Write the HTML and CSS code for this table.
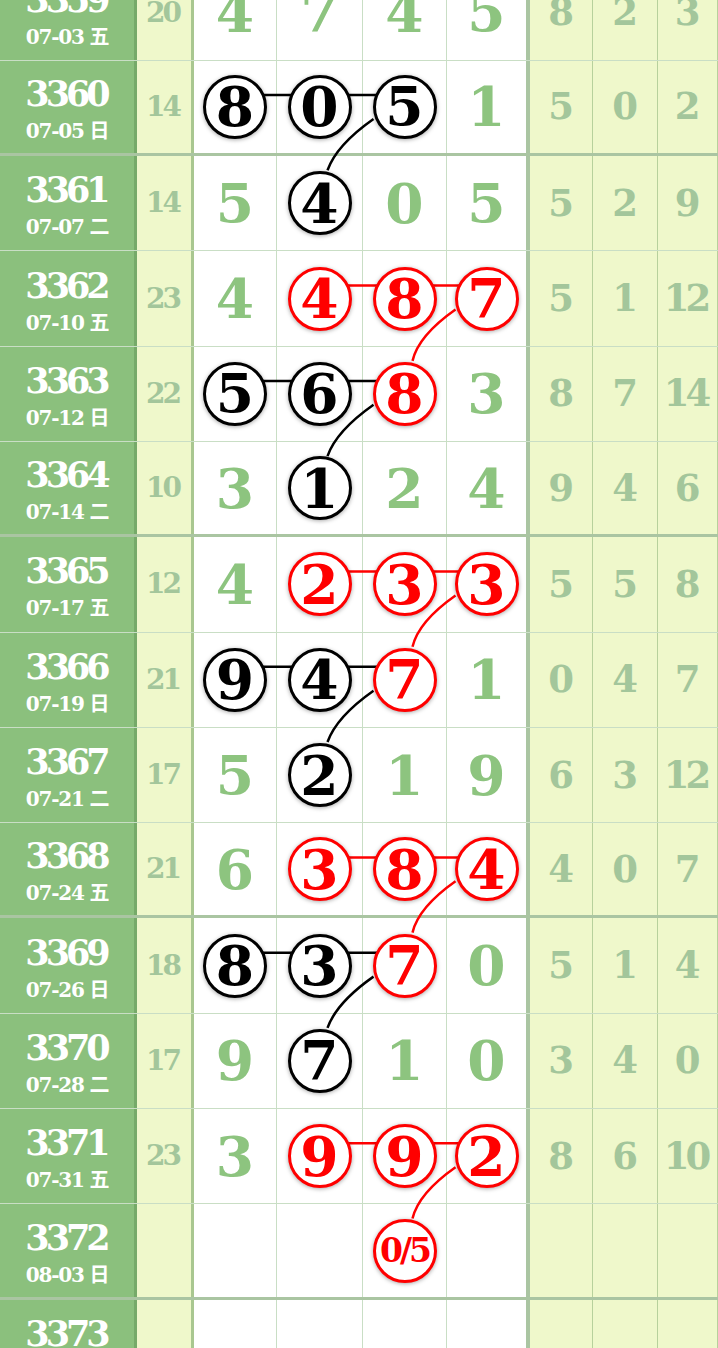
FILE: index.html
```html
<!DOCTYPE html>
<html lang="zh-CN">
<head>
<meta charset="UTF-8">
<meta name="viewport" content="width=device-width, initial-scale=1.0">
<title>走势图</title>
<link rel="stylesheet" href="styles.css">
</head>
<body>
<div class="board">
  <!-- 连线 (page coords) -->
  <svg class="links" width="718" height="1334.2" viewBox="0 -34.5 718 1334.2">
    <g fill="none" stroke="#000" stroke-width="2.5">
      <path d="M235,94.5 H404.5"/>
      <path d="M235,380.4 H404.5"/>
      <path d="M235,666.3 H404.5"/>
      <path d="M235,952.2 H404.5"/>
      <path d="M373.5,118.45 Q336.5,144.45 327.5,169.75"/>
      <path d="M373.5,404.35 Q336.5,430.35 327.5,455.65"/>
      <path d="M373.5,690.25 Q336.5,716.25 327.5,741.55"/>
      <path d="M373.5,976.15 Q336.5,1002.15 327.5,1027.45"/>
    </g>
    <g fill="none" stroke="#f00" stroke-width="2.5">
      <path d="M319.5,285.1 H486.5"/>
      <path d="M319.5,571 H486.5"/>
      <path d="M319.5,856.9 H486.5"/>
      <path d="M319.5,1142.8 H486.5"/>
      <path d="M455.5,309.05 Q418.5,335.05 412.5,360.35"/>
      <path d="M455.5,594.95 Q418.5,620.95 412.5,646.25"/>
      <path d="M455.5,880.85 Q418.5,906.85 412.5,932.15"/>
      <path d="M455.5,1166.75 Q418.5,1192.75 412.5,1218.05"/>
    </g>
  </svg>

  <div class="row">
    <div class="cell issue"><span class="no">3359</span><span class="day">07-03 五</span></div>
    <div class="cell sum">20</div>
    <div class="cell num">4</div><div class="cell num">7</div><div class="cell num">4</div><div class="cell num last">5</div>
    <div class="cell dist">8</div><div class="cell dist">2</div><div class="cell dist">3</div>
  </div>
  <div class="row sep">
    <div class="cell issue"><span class="no">3360</span><span class="day">07-05 日</span></div>
    <div class="cell sum">14</div>
    <div class="cell num"><span class="ball">8</span></div><div class="cell num"><span class="ball">0</span></div><div class="cell num"><span class="ball">5</span></div><div class="cell num last">1</div>
    <div class="cell dist">5</div><div class="cell dist">0</div><div class="cell dist">2</div>
  </div>
  <div class="row">
    <div class="cell issue"><span class="no">3361</span><span class="day">07-07 二</span></div>
    <div class="cell sum">14</div>
    <div class="cell num">5</div><div class="cell num"><span class="ball">4</span></div><div class="cell num">0</div><div class="cell num last">5</div>
    <div class="cell dist">5</div><div class="cell dist">2</div><div class="cell dist">9</div>
  </div>
  <div class="row">
    <div class="cell issue"><span class="no">3362</span><span class="day">07-10 五</span></div>
    <div class="cell sum">23</div>
    <div class="cell num">4</div><div class="cell num"><span class="ball red">4</span></div><div class="cell num"><span class="ball red">8</span></div><div class="cell num last"><span class="ball red">7</span></div>
    <div class="cell dist">5</div><div class="cell dist">1</div><div class="cell dist">12</div>
  </div>
  <div class="row">
    <div class="cell issue"><span class="no">3363</span><span class="day">07-12 日</span></div>
    <div class="cell sum">22</div>
    <div class="cell num"><span class="ball">5</span></div><div class="cell num"><span class="ball">6</span></div><div class="cell num"><span class="ball red">8</span></div><div class="cell num last">3</div>
    <div class="cell dist">8</div><div class="cell dist">7</div><div class="cell dist">14</div>
  </div>
  <div class="row sep">
    <div class="cell issue"><span class="no">3364</span><span class="day">07-14 二</span></div>
    <div class="cell sum">10</div>
    <div class="cell num">3</div><div class="cell num"><span class="ball">1</span></div><div class="cell num">2</div><div class="cell num last">4</div>
    <div class="cell dist">9</div><div class="cell dist">4</div><div class="cell dist">6</div>
  </div>
  <div class="row">
    <div class="cell issue"><span class="no">3365</span><span class="day">07-17 五</span></div>
    <div class="cell sum">12</div>
    <div class="cell num">4</div><div class="cell num"><span class="ball red">2</span></div><div class="cell num"><span class="ball red">3</span></div><div class="cell num last"><span class="ball red">3</span></div>
    <div class="cell dist">5</div><div class="cell dist">5</div><div class="cell dist">8</div>
  </div>
  <div class="row">
    <div class="cell issue"><span class="no">3366</span><span class="day">07-19 日</span></div>
    <div class="cell sum">21</div>
    <div class="cell num"><span class="ball">9</span></div><div class="cell num"><span class="ball">4</span></div><div class="cell num"><span class="ball red">7</span></div><div class="cell num last">1</div>
    <div class="cell dist">0</div><div class="cell dist">4</div><div class="cell dist">7</div>
  </div>
  <div class="row">
    <div class="cell issue"><span class="no">3367</span><span class="day">07-21 二</span></div>
    <div class="cell sum">17</div>
    <div class="cell num">5</div><div class="cell num"><span class="ball">2</span></div><div class="cell num">1</div><div class="cell num last">9</div>
    <div class="cell dist">6</div><div class="cell dist">3</div><div class="cell dist">12</div>
  </div>
  <div class="row sep">
    <div class="cell issue"><span class="no">3368</span><span class="day">07-24 五</span></div>
    <div class="cell sum">21</div>
    <div class="cell num">6</div><div class="cell num"><span class="ball red">3</span></div><div class="cell num"><span class="ball red">8</span></div><div class="cell num last"><span class="ball red">4</span></div>
    <div class="cell dist">4</div><div class="cell dist">0</div><div class="cell dist">7</div>
  </div>
  <div class="row">
    <div class="cell issue"><span class="no">3369</span><span class="day">07-26 日</span></div>
    <div class="cell sum">18</div>
    <div class="cell num"><span class="ball">8</span></div><div class="cell num"><span class="ball">3</span></div><div class="cell num"><span class="ball red">7</span></div><div class="cell num last">0</div>
    <div class="cell dist">5</div><div class="cell dist">1</div><div class="cell dist">4</div>
  </div>
  <div class="row">
    <div class="cell issue"><span class="no">3370</span><span class="day">07-28 二</span></div>
    <div class="cell sum">17</div>
    <div class="cell num">9</div><div class="cell num"><span class="ball">7</span></div><div class="cell num">1</div><div class="cell num last">0</div>
    <div class="cell dist">3</div><div class="cell dist">4</div><div class="cell dist">0</div>
  </div>
  <div class="row">
    <div class="cell issue"><span class="no">3371</span><span class="day">07-31 五</span></div>
    <div class="cell sum">23</div>
    <div class="cell num">3</div><div class="cell num"><span class="ball red">9</span></div><div class="cell num"><span class="ball red">9</span></div><div class="cell num last"><span class="ball red">2</span></div>
    <div class="cell dist">8</div><div class="cell dist">6</div><div class="cell dist">10</div>
  </div>
  <div class="row sep">
    <div class="cell issue"><span class="no">3372</span><span class="day">08-03 日</span></div>
    <div class="cell sum"></div>
    <div class="cell num"></div><div class="cell num"></div><div class="cell num"><span class="ball red small">0/5</span></div><div class="cell num last"></div>
    <div class="cell dist"></div><div class="cell dist"></div><div class="cell dist"></div>
  </div>
  <div class="row">
    <div class="cell issue"><span class="no">3373</span><span class="day">08-05 二</span></div>
    <div class="cell sum"></div>
    <div class="cell num"></div><div class="cell num"></div><div class="cell num"></div><div class="cell num last"></div>
    <div class="cell dist"></div><div class="cell dist"></div><div class="cell dist"></div>
  </div>
</div>
</body>
</html>
```

FILE: styles.css
```css
body {
  margin: 0;
  background: #fff;
  font-family: "DejaVu Serif", "Noto Sans CJK SC", serif;
  overflow: hidden;
}
.board {
  position: relative;
  width: 718px;
  margin-top: -34.5px;
}
.links {
  position: absolute;
  left: 0;
  top: 0;
  z-index: 1;
}
.row {
  display: grid;
  grid-template-columns: 137px 57px 83px 86px 84px 83px 63px 65px 60px;
  height: 95.3px;
  box-sizing: border-box;
  border-bottom: 1.5px solid rgba(100, 160, 90, 0.35);
}
.row.sep {
  border-bottom: 3px solid rgba(100, 150, 85, 0.55);
}
.cell {
  display: flex;
  align-items: center;
  justify-content: center;
  box-sizing: border-box;
  border-right: 1px solid rgba(100, 160, 90, 0.35);
  font-weight: bold;
  line-height: 1;
}
.issue {
  flex-direction: column;
  padding-top: 7px;
  background: #8bc07d;
  color: #fff;
  border-right: 3px solid rgba(70, 120, 60, 0.3);
}
.issue .no {
  font-size: 35px;
  letter-spacing: -4px;
  line-height: 34px;
  margin-right: 2px;
}
.issue .day {
  font-size: 20px;
  letter-spacing: -1.2px;
  line-height: 26px;
  margin-top: 7px;
}
.sum {
  background: #eff8cb;
  color: #a3c69b;
  font-size: 28px;
  letter-spacing: -3px;
  padding-right: 3px;
  border-right: 3px solid rgba(100, 150, 85, 0.5);
}
.num {
  background: #fff;
  color: #8dc47f;
  font-size: 55px;
}
.num.last {
  border-right: 4px solid rgba(100, 150, 85, 0.55);
}
.dist {
  background: #eff8cb;
  color: #a3c69b;
  font-size: 37px;
  letter-spacing: -4px;
  padding-right: 4px;
  border-right: 1.5px solid rgba(100, 150, 85, 0.4);
}
.ball {
  position: relative;
  z-index: 2;
  display: flex;
  align-items: center;
  justify-content: center;
  width: 64px;
  height: 64px;
  box-sizing: border-box;
  border: 3px solid #000;
  border-radius: 50%;
  background: #fff;
  color: #000;
  letter-spacing: 0;
  box-shadow: 0 1px 4px rgba(0, 0, 0, 0.35);
}
.ball.red {
  border-color: #f00;
  color: #f00;
}
.ball.small {
  font-size: 33px;
  letter-spacing: -3px;
}
```
